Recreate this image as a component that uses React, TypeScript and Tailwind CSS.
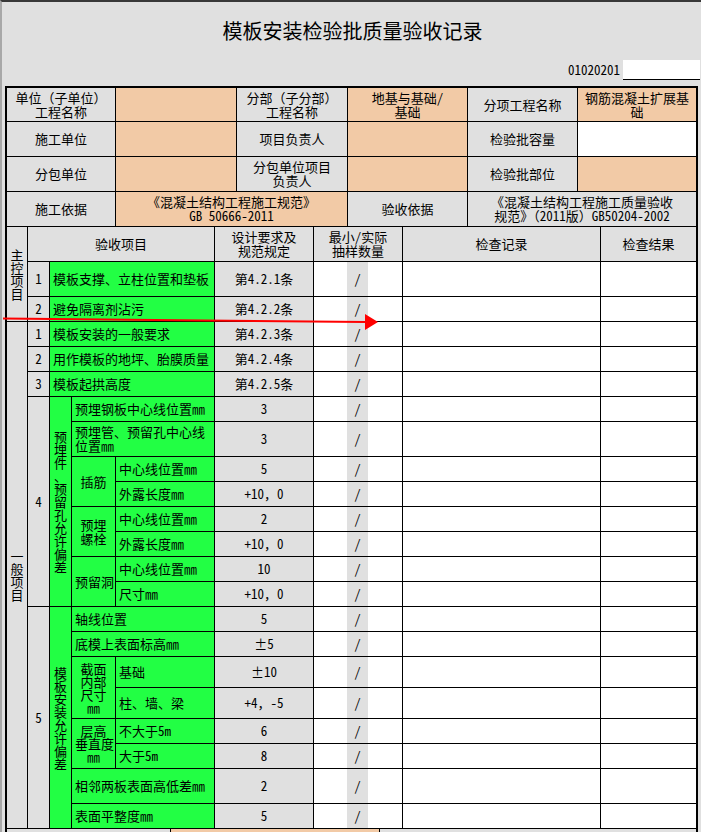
import type { ReactNode } from 'react'

const GRAY = 'bg-[#e0e0e0]'
const PEACH = 'bg-[#f2caa6]'
const GREEN = 'bg-[#22ff44]'

function Td({ c = '', colSpan, rowSpan, children }: { c?: string, colSpan?: number, rowSpan?: number, children?: ReactNode }) {
    return (
        <td colSpan={colSpan} rowSpan={rowSpan} className={`border-r border-b border-black px-[3px] py-0 ${c}`}>
            {children}
        </td>
    )
}

function VText({ text }: { text: string }) {
    return (
        <div className="flex flex-col items-center leading-[13px]">
            {[...text].map((ch, i) => <span key={i}>{ch}</span>)}
        </div>
    )
}

// sample count (white | grey "/" | white) + record + result
function Tail() {
    return (
        <>
            <td className="border-b border-black bg-white" />
            <td className={`border-b border-black ${GRAY} text-center`}>/</td>
            <td className="border-r border-b border-black bg-white" />
            <td className="border-r border-b border-black bg-white" />
            <td className="border-r border-b border-black bg-white" />
        </>
    )
}

function Item({ h, no, label, spec }: { h: string, no: string, label: string, spec: string }) {
    return (
        <tr className={h}>
            <Td c={`${GRAY} text-center`}>{no}</Td>
            <Td c={`${GREEN} whitespace-nowrap`} colSpan={3}>{label}</Td>
            <Td c={`${GRAY} text-center`}>{spec}</Td>
            <Tail />
        </tr>
    )
}

export default function App() {
    return (
        <div className={`relative w-[701px] h-[832px] overflow-hidden ${GRAY} border-t-2 border-l-2 border-t-[#383838] border-l-[#a8a8a8] text-black text-[13px] leading-[14px] font-['Noto_Sans_Mono_CJK_SC','Noto_Sans_CJK_SC',sans-serif]`}>

            {/* TITLE */}
            <div className="h-[58px] flex items-center justify-center text-[20px] pl-[2px]">
                模板安装检验批质量验收记录
            </div>
            <div className="h-[20px] flex justify-end items-center pr-[1px]">
                <span>01020201</span>
                <div className="ml-[3px] w-[77px] h-[20px] bg-white border-b border-black" />
            </div>
            <div className="h-[6px]" />

            <div className="ml-[3px] w-[693px] border-t-2 border-l-2 border-r border-black">

                {/* PROJECT INFO */}
                <table className="table-fixed w-[690px] border-separate border-spacing-0 text-center">
                    <colgroup>
                        <col className="w-[109px]" />
                        <col className="w-[121px]" />
                        <col className="w-[111px]" />
                        <col className="w-[120px]" />
                        <col className="w-[110px]" />
                        <col className="w-[119px]" />
                    </colgroup>
                    <tbody>
                        <tr className="h-[34px]">
                            <Td c={GRAY}>单位（子单位）<br />工程名称</Td>
                            <Td c={PEACH} />
                            <Td c={GRAY}>分部（子分部）<br />工程名称</Td>
                            <Td c={PEACH}>地基与基础/<br />基础</Td>
                            <Td c={GRAY}>分项工程名称</Td>
                            <Td c={PEACH}>钢筋混凝土扩展基<br />础</Td>
                        </tr>
                        <tr className="h-[35px]">
                            <Td c={GRAY}>施工单位</Td>
                            <Td c={PEACH} />
                            <Td c={GRAY}>项目负责人</Td>
                            <Td c={PEACH} />
                            <Td c={GRAY}>检验批容量</Td>
                            <Td c="bg-white" />
                        </tr>
                        <tr className="h-[35px]">
                            <Td c={GRAY}>分包单位</Td>
                            <Td c={PEACH} />
                            <Td c={GRAY}>分包单位项目<br />负责人</Td>
                            <Td c={PEACH} />
                            <Td c={GRAY}>检验批部位</Td>
                            <Td c={PEACH} />
                        </tr>
                        <tr className="h-[35px]">
                            <Td c={GRAY}>施工依据</Td>
                            <Td c={`${PEACH} whitespace-nowrap`} colSpan={2}>《混凝土结构工程施工规范》<br />GB 50666-2011</Td>
                            <Td c={GRAY}>验收依据</Td>
                            <Td c={`${GRAY} whitespace-nowrap`} colSpan={2}>《混凝土结构工程施工质量验收<br />规范》（2011版）GB50204-2002</Td>
                        </tr>
                    </tbody>
                </table>

                {/* INSPECTION ITEMS */}
                <table className="table-fixed w-[690px] border-separate border-spacing-0">
                    <colgroup>
                        <col className="w-[21px]" />
                        <col className="w-[22px]" />
                        <col className="w-[22px]" />
                        <col className="w-[44px]" />
                        <col className="w-[99px]" />
                        <col className="w-[99px]" />
                        <col className="w-[33px]" />
                        <col className="w-[21px]" />
                        <col className="w-[35px]" />
                        <col className="w-[198px]" />
                        <col className="w-[96px]" />
                    </colgroup>
                    <tbody>
                        <tr className="h-[35px]">
                            <Td c={`${GRAY} px-0`} rowSpan={3}><VText text="主控项目" /></Td>
                            <Td c={`${GRAY} text-center`} colSpan={4}>验收项目</Td>
                            <Td c={`${GRAY} text-center`}>设计要求及<br />规范规定</Td>
                            <Td c={`${GRAY} text-center`} colSpan={3}>最小/实际<br />抽样数量</Td>
                            <Td c={`${GRAY} text-center`}>检查记录</Td>
                            <Td c={`${GRAY} text-center`}>检查结果</Td>
                        </tr>
                        <Item h="h-[35px]" no="1" label="模板支撑、立柱位置和垫板" spec="第4.2.1条" />
                        <Item h="h-[25px]" no="2" label="避免隔离剂沾污" spec="第4.2.2条" />

                        <tr className="h-[25px]">
                            <Td c={`${GRAY} px-0`} rowSpan={20}><VText text="一般项目" /></Td>
                            <Td c={`${GRAY} text-center`}>1</Td>
                            <Td c={GREEN} colSpan={3}>模板安装的一般要求</Td>
                            <Td c={`${GRAY} text-center`}>第4.2.3条</Td>
                            <Tail />
                        </tr>
                        <Item h="h-[25px]" no="2" label="用作模板的地坪、胎膜质量" spec="第4.2.4条" />
                        <Item h="h-[25px]" no="3" label="模板起拱高度" spec="第4.2.5条" />

                        {/* group 4 */}
                        <tr className="h-[25px]">
                            <Td c={`${GRAY} text-center`} rowSpan={8}>4</Td>
                            <Td c={`${GREEN} px-0`} rowSpan={8}><VText text="预埋件、预留孔允许偏差" /></Td>
                            <Td c={GREEN} colSpan={2}>预埋钢板中心线位置㎜</Td>
                            <Td c={`${GRAY} text-center`}>3</Td>
                            <Tail />
                        </tr>
                        <tr className="h-[35px]">
                            <Td c={`${GREEN} whitespace-nowrap`} colSpan={2}>预埋管、预留孔中心线<br />位置㎜</Td>
                            <Td c={`${GRAY} text-center`}>3</Td>
                            <Tail />
                        </tr>
                        <tr className="h-[25px]">
                            <Td c={`${GREEN} text-center whitespace-nowrap px-0`} rowSpan={2}>插筋</Td>
                            <Td c={GREEN}>中心线位置㎜</Td>
                            <Td c={`${GRAY} text-center`}>5</Td>
                            <Tail />
                        </tr>
                        <tr className="h-[25px]">
                            <Td c={GREEN}>外露长度㎜</Td>
                            <Td c={`${GRAY} text-center`}>+10，0</Td>
                            <Tail />
                        </tr>
                        <tr className="h-[25px]">
                            <Td c={`${GREEN} text-center whitespace-nowrap px-0`} rowSpan={2}>预埋<br />螺栓</Td>
                            <Td c={GREEN}>中心线位置㎜</Td>
                            <Td c={`${GRAY} text-center`}>2</Td>
                            <Tail />
                        </tr>
                        <tr className="h-[25px]">
                            <Td c={GREEN}>外露长度㎜</Td>
                            <Td c={`${GRAY} text-center`}>+10，0</Td>
                            <Tail />
                        </tr>
                        <tr className="h-[25px]">
                            <Td c={`${GREEN} text-center whitespace-nowrap px-0`} rowSpan={2}>预留洞</Td>
                            <Td c={GREEN}>中心线位置㎜</Td>
                            <Td c={`${GRAY} text-center`}>10</Td>
                            <Tail />
                        </tr>
                        <tr className="h-[25px]">
                            <Td c={GREEN}>尺寸㎜</Td>
                            <Td c={`${GRAY} text-center`}>+10，0</Td>
                            <Tail />
                        </tr>

                        {/* group 5 */}
                        <tr className="h-[25px]">
                            <Td c={`${GRAY} text-center`} rowSpan={8}>5</Td>
                            <Td c={`${GREEN} px-0`} rowSpan={8}><VText text="模板安装允许偏差" /></Td>
                            <Td c={GREEN} colSpan={2}>轴线位置</Td>
                            <Td c={`${GRAY} text-center`}>5</Td>
                            <Tail />
                        </tr>
                        <tr className="h-[25px]">
                            <Td c={GREEN} colSpan={2}>底模上表面标高㎜</Td>
                            <Td c={`${GRAY} text-center`}>±5</Td>
                            <Tail />
                        </tr>
                        <tr className="h-[31px]">
                            <Td c={`${GREEN} text-center whitespace-nowrap leading-[13px] px-0`} rowSpan={2}>截面<br />内部<br />尺寸<br />㎜</Td>
                            <Td c={GREEN}>基础</Td>
                            <Td c={`${GRAY} text-center`}>±10</Td>
                            <Tail />
                        </tr>
                        <tr className="h-[31px]">
                            <Td c={GREEN}>柱、墙、梁</Td>
                            <Td c={`${GRAY} text-center`}>+4，-5</Td>
                            <Tail />
                        </tr>
                        <tr className="h-[25px]">
                            <Td c={`${GREEN} text-center whitespace-nowrap leading-[13px] px-0`} rowSpan={2}>层高<br />垂直度<br />㎜</Td>
                            <Td c={GREEN}>不大于5m</Td>
                            <Td c={`${GRAY} text-center`}>6</Td>
                            <Tail />
                        </tr>
                        <tr className="h-[25px]">
                            <Td c={GREEN}>大于5m</Td>
                            <Td c={`${GRAY} text-center`}>8</Td>
                            <Tail />
                        </tr>
                        <tr className="h-[35px]">
                            <Td c={GREEN} colSpan={2}>相邻两板表面高低差㎜</Td>
                            <Td c={`${GRAY} text-center`}>2</Td>
                            <Tail />
                        </tr>
                        <tr className="h-[25px]">
                            <Td c={GREEN} colSpan={2}>表面平整度㎜</Td>
                            <Td c={`${GRAY} text-center`}>5</Td>
                            <Tail />
                        </tr>
                    </tbody>
                </table>

                {/* next row, cut off by the window */}
                <table className="table-fixed w-[690px] border-separate border-spacing-0">
                    <colgroup>
                        <col className="w-[164px]" />
                        <col className="w-[209px]" />
                        <col className="w-[317px]" />
                    </colgroup>
                    <tbody>
                        <tr className="h-[30px]">
                            <Td c={GRAY} />
                            <Td c={PEACH} />
                            <Td c={GRAY} />
                        </tr>
                    </tbody>
                </table>
            </div>

            {/* red arrow drawn over the sheet */}
            <svg className="absolute left-[-2px] top-[-2px] pointer-events-none" width="701" height="832" viewBox="0 0 701 832">
                <line x1="3" y1="318.5" x2="366" y2="322" stroke="#ff0000" strokeWidth="2" />
                <polygon points="365,314 378,322 365,330" fill="#ff0000" />
            </svg>
        </div>
    )
}
